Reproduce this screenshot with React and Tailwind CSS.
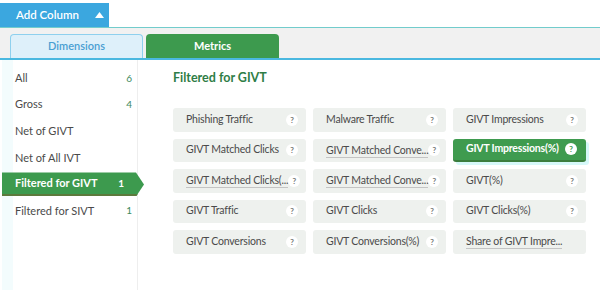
const items = [
  { label: "All", count: "6" },
  { label: "Gross", count: "4" },
  { label: "Net of GIVT" },
  { label: "Net of All IVT" },
  { label: "Filtered for GIVT", count: "1", active: true },
  { label: "Filtered for SIVT", count: "1" },
];

const metrics = [
  { label: "Phishing Traffic" },
  { label: "Malware Traffic" },
  { label: "GIVT Impressions" },
  { label: "GIVT Matched Clicks" },
  { label: "GIVT Matched Conve...", cut: true },
  { label: "GIVT Impressions(%)", active: true },
  { label: "GIVT Matched Clicks(...", cut: true },
  { label: "GIVT Matched Conve...", cut: true },
  { label: "GIVT(%)" },
  { label: "GIVT Traffic" },
  { label: "GIVT Clicks" },
  { label: "GIVT Clicks(%)" },
  { label: "GIVT Conversions" },
  { label: "GIVT Conversions(%)" },
  { label: "Share of GIVT Impre...", cut: true, noHelp: true },
];

const Help = ({ active }) => (
  <span
    className={
      "w-[12px] h-[12px] shrink-0 rounded-full flex items-center justify-center text-[8px] font-bold leading-none tracking-normal " +
      (active ? "bg-white text-[#3d9a4e]" : "bg-white text-[#777]")
    }
  >
    ?
  </span>
);

export default function App() {
  return (
    <div
      className="w-[600px] h-[290px] bg-white overflow-hidden"
      style={{ fontFamily: 'Lato, "Noto Sans", sans-serif' }}
    >
      {/* header */}
      <div className="pt-[3px] flex">
        <div className="w-[109px] h-[24px] bg-[#3ba7df] flex items-center pl-[16px] gap-[16px] text-white text-[11.5px] font-semibold whitespace-nowrap">
          <span>Add Column</span>
          <svg width="9" height="6" viewBox="0 0 9 6">
            <path d="M0 6 L4.5 0 L9 6 Z" fill="white" />
          </svg>
        </div>
        <div className="flex-1" />
      </div>
      <div className="h-[33px] border-t border-[#72cccc] bg-[#f1f1f1] border-b-2 border-b-[#4ab8e0] flex items-end pl-[10px] gap-[3px]">
        <div className="w-[133px] h-[24px] rounded-t-[4px] bg-[#def0fa] border border-b-0 border-[#8ed0ee] flex items-center justify-center text-[11px] font-semibold text-[#4a9fd2]">
          Dimensions
        </div>
        <div className="w-[133px] h-[24px] rounded-t-[4px] bg-[#3d9a4e] flex items-center justify-center text-[11px] font-bold text-white">
          Metrics
        </div>
      </div>

      <div className="flex h-[230px]">
        {/* sidebar */}
        <div className="w-[138px] shrink-0 border-r border-[#eeeeee] flex">
          <div className="w-[2px] ml-[2px] bg-[#c9cbe9]" />
          <div className="flex-1 relative">
            <div className="absolute left-0 top-0 bottom-0 w-[11px] bg-[#f3fcfd]" />
            <div className="relative flex flex-col gap-[2.6px] pt-[6px]">
              {items.map((it, i) =>
                it.active ? (
                  <div
                    key={i}
                    className="w-[142px] h-[24px] bg-[#3d9a4e] border-b-2 border-[#5c7a3c] flex items-center justify-between pl-[13px] pr-[20px] text-[11px] font-bold text-white whitespace-nowrap [clip-path:polygon(0_0,calc(100%-8px)_0,100%_50%,calc(100%-8px)_100%,0_100%)]"
                  >
                    <span>{it.label}</span>
                    <span className="text-[10px]">{it.count}</span>
                  </div>
                ) : (
                  <div
                    key={i}
                    className="h-[24px] flex items-center justify-between pl-[13px] pr-[12px] text-[11px] text-[#4a4a4a] whitespace-nowrap"
                  >
                    <span>{it.label}</span>
                    <span className="text-[10px] text-[#3e8a5e]">{it.count}</span>
                  </div>
                )
              )}
            </div>
          </div>
        </div>

        {/* main */}
        <div className="flex-1 pl-[35px] pt-[10px]">
          <div className="text-[12.5px] leading-[16px] font-bold text-[#2f7d46]">
            Filtered for GIVT
          </div>
          <div className="mt-[22px] grid grid-cols-[133px_133px_133px] gap-x-[7px] gap-y-[7px]">
            {metrics.map((m, i) =>
              m.active ? (
                <div
                  key={i}
                  className="h-[23.5px] rounded-[3px] bg-[#3f9b4f] border-b-2 border-[#3b7d3d] shadow-[3px_3px_0_#d6f8f9] flex items-center justify-between pl-[13px] pr-[9px] text-[10.5px] tracking-[-0.2px] text-white font-bold whitespace-nowrap"
                >
                  <span>{m.label}</span>
                  <Help active />
                </div>
              ) : (
                <div
                  key={i}
                  className="h-[23.5px] rounded-[3px] bg-[#eef1ee] flex items-center justify-between pl-[13px] pr-[8px] text-[10.5px] tracking-[-0.2px] text-[#4a4a4a]"
                >
                  <span
                    className={
                      m.cut ? "border-b border-[#c4c4c4] leading-[14px] whitespace-nowrap" : "whitespace-nowrap"
                    }
                  >
                    {m.label}
                  </span>
                  {!m.noHelp && <Help />}
                </div>
              )
            )}
          </div>
        </div>
      </div>
    </div>
  );
}
